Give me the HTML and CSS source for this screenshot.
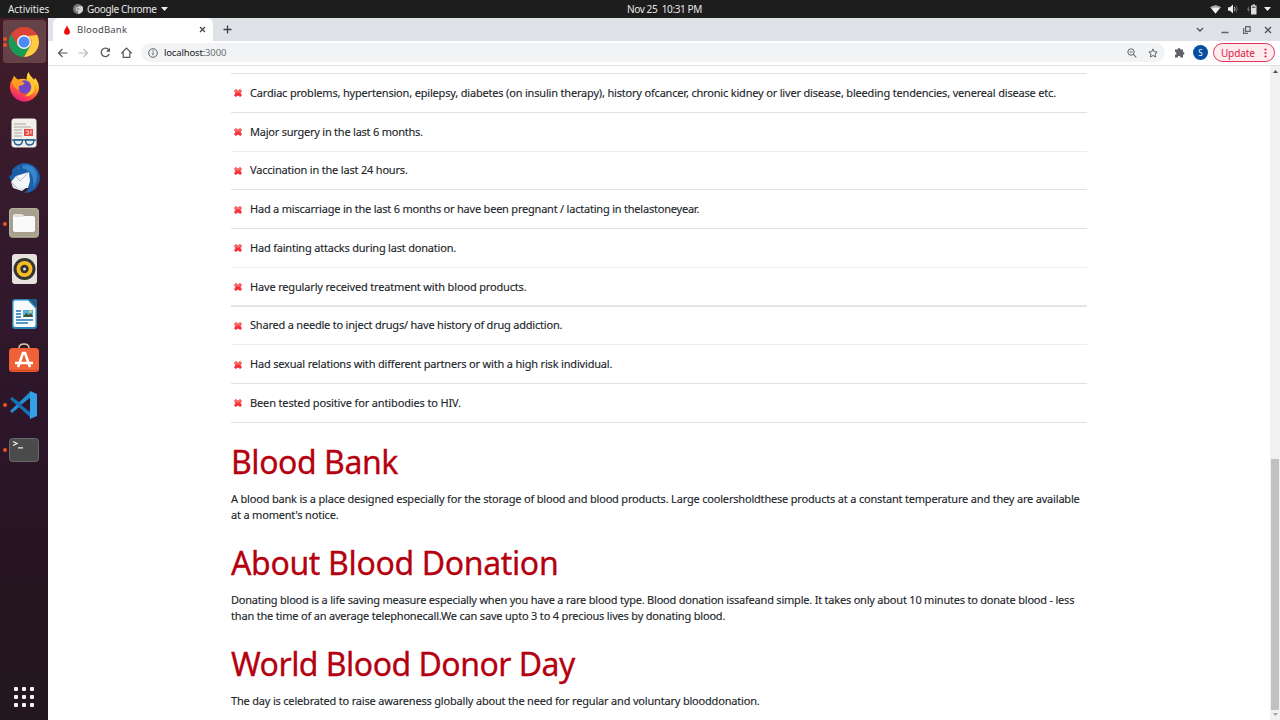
FILE: index.html
```html
<!DOCTYPE html>
<html lang="en">
<head>
<meta charset="utf-8">
<title>BloodBank</title>
<link rel="stylesheet" href="styles.css">
</head>
<body>
<header class="topbar">
  <span class="activities">Activities</span>
  <div class="app-menu">
    <svg width="10" height="10" viewBox="0 0 30 30"><circle cx="15" cy="15" r="15" fill="#777"/><path d="M15 15V30A15 15 0 0 0 28 7H15Z" fill="#d0d0d0"/><circle cx="15" cy="15" r="7" fill="#eee"/><circle cx="15" cy="15" r="5" fill="#999"/></svg>
    <span>Google Chrome</span>
    <svg width="7" height="4" viewBox="0 0 7 4"><path d="M0 0h7L3.500 4z" fill="#eee"/></svg>
  </div>
  <span class="clock">Nov 25&nbsp; 10:31 PM</span>
  <div class="tray">
    <svg width="11" height="9" viewBox="0 0 11 9"><path d="M.3 2.300Q5.500-1.300 10.700 2.300L5.500 8.800Z" fill="#eee"/><path d="M.3 2.300Q5.500-1.300 10.700 2.300L9.500 3.800Q5.500 1.100 1.500 3.800Z" fill="#aaa"/></svg>
    <svg width="11" height="10" viewBox="0 0 11 10"><path d="M0 3.300h2L5 .5v9L2 6.700H0z" fill="#eee"/><path d="M6.300 3q1.500 2 0 4" stroke="#ccc" fill="none"/><path d="M8 1.500q2.500 3.500 0 7" stroke="#666" fill="none"/></svg>
    <svg width="10" height="11" viewBox="0 0 10 11"><path d="M2 2 0 6h1.500L1 9l2-4H1.800z" fill="#777"/><path d="M4 1.500h1.500V.5h2.500v1H9.500v9H4z" fill="#ddd"/><path d="M5 2.500h3.500v1.500H5z" fill="#666"/></svg>
    <svg width="7" height="4" viewBox="0 0 7 4"><path d="M0 0h7L3.500 4z" fill="#eee"/></svg>
  </div>
</header>
<div class="desktop">
  <nav class="dock">
    <div class="dock-item active two">
      <svg width="30" height="30" viewBox="0 0 30 30"><circle cx="15" cy="15" r="15" fill="#db4437"/><path d="M2 7.500A15 15 0 0 0 15 30L21.500 18.500 8.500 18.500Z" fill="#179c58"/><path d="M28.200 8A15 15 0 0 1 15 30L21.500 18.500A7 7 0 0 0 19 9Z" fill="#ffcd40"/><path d="M15 8H28.200L27 6 15 6Z" fill="#db4437"/><circle cx="15" cy="15" r="7" fill="#f4f4f4"/><circle cx="15" cy="15" r="5.500" fill="#4c8bf5"/></svg>
    </div>
    <div class="dock-item firefox">
      <svg width="31" height="31" viewBox="0 0 32 32"><defs><linearGradient id="fx" x1=".8" y1="0" x2=".3" y2="1"><stop offset="0" stop-color="#fff04a"/><stop offset=".4" stop-color="#ffad24"/><stop offset=".7" stop-color="#ff503c"/><stop offset="1" stop-color="#e31587"/></linearGradient></defs><path d="M20 1Q22 6 26 9L27 7Q33 15 30 22A15 15 0 0 1 2 22Q-1 14 4 8L5 5 9 9Q15 7 18 9 18 4 20 1Z" fill="url(#fx)"/><circle cx="16" cy="16.500" r="7" fill="#7046c7"/><path d="M3 9Q7 7 10 9L16 12Q15 15 11 15 9 17 11 20 4 18 3 9Z" fill="#ff9b24"/><path d="M20 9Q26 11 26 20 24 26 17 26 28 17 20 9Z" fill="#ffc931"/></svg>
    </div>
    <div class="dock-item">
      <svg width="26" height="30" viewBox="0 0 26 30"><rect x=".5" y=".5" width="25" height="29" rx="3" fill="#f1f0eb"/><path d="M3 6h12M3 9h17M3 12h8M3 15h8M3 18h8" stroke="#aaa79e"/><rect x="13" y="11" width="9" height="7" fill="#e34d45"/><path d="M15 13h2.500v3H15m5-4v4" stroke="#fbd5d0" fill="none"/><path d="M1 22h24" stroke="#28598b" stroke-width="1.300"/><path d="M3 22h8.500q0 5-4.200 5T3 22Zm11.500 0H23q0 5-4.300 5t-4.200-5Z" fill="#dceaf2" stroke="#28598b" stroke-width="1.400"/></svg>
    </div>
    <div class="dock-item">
      <svg width="32" height="32" viewBox="0 0 32 32"><path d="M7 5Q17-3 27 5 35 13 30 23 26 31 16 31 19 29 21 25L5 20Q2 19 1 13 4 15 4 10 3 8 7 5Z" fill="#1b5fa8"/><path d="M9 7Q16 0 25 5 31 11 28 20L25 26Q27 15 21 9 16 5 9 7Z" fill="#3486cf"/><path d="M8 14 21 10 22 19 20 26 9 26 3 20Z" fill="#f5f6fa"/><path d="M8 14 12 19 21 10" fill="none" stroke="#b3bbc7"/><path d="M3 20 9 26 18 26 14 29 5 26Z" fill="#e3e7ee"/><path d="M11 5l4-1-2 3z" fill="#174c83"/></svg>
    </div>
    <div class="dock-item one">
      <svg width="30" height="30" viewBox="0 0 30 30"><rect width="30" height="30" rx="4" fill="#978f7e"/><rect x=".5" y=".5" width="29" height="28" rx="3.500" fill="#a8a08f" stroke="#b8b09e"/><path d="M4 8Q4 6 6 6h7l2 2h9q2 0 2 2v12q0 2-2 2H6q-2 0-2-2z" fill="#fafafa"/><path d="M5 9h8l2-1-2-2H6q-2 0-1 3" fill="#e2dfd9"/></svg>
    </div>
    <div class="dock-item">
      <svg width="25" height="30" viewBox="0 0 25 30"><rect width="25" height="30" rx="3" fill="#e8e2de"/><circle cx="12.500" cy="15" r="11" fill="#343434"/><circle cx="12.500" cy="15" r="8" fill="#f6bc23"/><circle cx="12.500" cy="15" r="4.200" fill="#333"/><circle cx="12.500" cy="15" r="1.500" fill="#ddd"/></svg>
    </div>
    <div class="dock-item">
      <svg width="25" height="30" viewBox="0 0 25 30"><path d="M3 0h14l8 8v19q0 3-3 3H3q-3 0-3-3V3q0-3 3-3" fill="#2d86b8"/><path d="M3 1.500h13l7.500 8V26q0 2-2 2h-18q-2 0-2-2V3.500q0-2 1.500-2" fill="#f6fafb"/><path d="M17 0h8v8z" fill="#1e5c86"/><path d="M4 12h5M4 15h5M4 18h5M4 21h17M4 24h12" stroke="#2379ad" stroke-width="1.300"/><rect x="11" y="11" width="10" height="7" fill="#54aee0"/><path d="m11 18 3-4 3 2 2-2 2 4" fill="#42533b"/><circle cx="18.500" cy="12.800" r="1.200" fill="#ffdc47"/></svg>
    </div>
    <div class="dock-item store">
      <svg width="30" height="30" viewBox="0 0 30 30"><path d="M10 7V5q0-4 5-4t5 4v2" fill="none" stroke="#d9cba3" stroke-width="1.500"/><rect y="5" width="30" height="24" rx="3.500" fill="#ef6237"/><path d="M1.500 27.500h27" stroke="#d14b24" stroke-width="1.500"/><path d="m9 24 5-14h2l5 14M6 20h18" fill="none" stroke="#fff" stroke-width="2.600"/></svg>
    </div>
    <div class="dock-item one">
      <svg width="30" height="30" viewBox="0 0 30 30"><path d="m1 21 2 2L21 8V2Z" fill="#238ed3"/><path d="M1 9 3 7 22 21v7Z" fill="#1672b8"/><path d="M21 1 28 4v22l-7 3z" fill="#34a0e6"/><path d="M21 8 12 15 21 22Z" fill="#2e172b"/></svg>
    </div>
    <div class="dock-item one">
      <svg width="30" height="24" viewBox="0 0 30 24"><rect x=".5" y=".5" width="29" height="23" rx="3" fill="#4b4b4b" stroke="#686868"/><path d="m4 3.500 4 2-4 2M9 9.800h5" stroke="#eee" fill="none" stroke-width="1.300"/></svg>
    </div>
    <svg class="apps" width="20" height="20" viewBox="0 0 20 20" fill="#f4f4f4"><rect width="4" height="4" rx="1"/><rect x="8" width="4" height="4" rx="1"/><rect x="16" width="4" height="4" rx="1"/><rect y="8" width="4" height="4" rx="1"/><rect x="8" y="8" width="4" height="4" rx="1"/><rect x="16" y="8" width="4" height="4" rx="1"/><rect y="16" width="4" height="4" rx="1"/><rect x="8" y="16" width="4" height="4" rx="1"/><rect x="16" y="16" width="4" height="4" rx="1"/></svg>
  </nav>
  <section class="browser">
    <div class="tabstrip">
      <div class="tab">
        <svg width="8" height="10" viewBox="0 0 8 10"><path d="M4 .3Q4.500 2.300 6.300 4.500 8.300 9.500 4 9.700-.3 9.500 1.700 4.500 3.500 2.300 4 .3Z" fill="#f00a0a"/></svg>
        <span class="tab-title">BloodBank</span>
        <svg width="7" height="7" viewBox="0 0 7 7"><path d="m1 1 5 5m0-5L1 6" stroke="#45484b" stroke-width="1.200"/></svg>
      </div>
      <svg class="new-tab" width="9" height="9" viewBox="0 0 9 9"><path d="M4.500.5v8m-4-4h8" stroke="#3c4043" stroke-width="1.300"/></svg>
      <div class="window-buttons">
        <svg width="8" height="8" viewBox="0 0 8 8"><path d="m1 2 3 3 3-3" stroke="#4d5155" stroke-width="1.300" fill="none"/></svg>
        <svg width="8" height="8" viewBox="0 0 8 8"><path d="M.5 6.500h7" stroke="#5f6368" stroke-width="1.500"/></svg>
        <svg width="8" height="8" viewBox="0 0 8 8"><path d="M2.600.6h4.500v4.800H2.600zM.6 2v5.300h4.500" stroke="#5f6368" stroke-width="1.200" fill="none"/></svg>
        <svg width="8" height="8" viewBox="0 0 8 8"><path d="m1 1 6 6m0-6L1 7" stroke="#4d5155" stroke-width="1.300"/></svg>
      </div>
    </div>
    <div class="toolbar">
      <div class="nav-buttons">
        <svg width="11" height="10" viewBox="0 0 11 10"><path d="M10.500 5H1.500M5.500 1l-4 4 4 4" stroke="#55595e" stroke-width="1.200" fill="none"/></svg>
        <svg width="11" height="10" viewBox="0 0 11 10"><path d="M.5 5h9M5.500 1l4 4-4 4" stroke="#b9bbbe" stroke-width="1.200" fill="none"/></svg>
        <svg width="11" height="11" viewBox="0 0 11 11"><path d="M9.300 7A4.200 4.200 0 1 1 8.800 2.800" stroke="#55595e" stroke-width="1.300" fill="none"/><path d="M10 .7v4H6z" fill="#55595e"/></svg>
        <svg width="11" height="11" viewBox="0 0 11 11"><path d="M.7 6 5.500 1l4.800 5H8.800v4.300H2.200V6z" stroke="#55595e" stroke-width="1.200" fill="none"/></svg>
      </div>
      <div class="omnibox">
        <svg width="10" height="10" viewBox="0 0 10 10"><circle cx="5" cy="5" r="4.300" stroke="#5f6368" fill="none"/><path d="M5 4.300v3M5 2.300v1.100" stroke="#5f6368" stroke-width="1.100"/></svg>
        <span class="url">localhost:<span class="port">3000</span></span>
        <svg class="magnifier" width="10" height="10" viewBox="0 0 10 10"><circle cx="4" cy="4" r="3.200" stroke="#5f6368" fill="none"/><path d="m6.300 6.300 3 3M2.500 4h3" stroke="#5f6368" stroke-width="1.100"/></svg>
        <svg width="10" height="10" viewBox="0 0 10 10"><path d="m5 .9 1.200 2.800 3 .3L7 6l.7 3L5 7.500 2.300 9 3 6 .8 4l3-.3z" stroke="#5f6368" fill="none"/></svg>
      </div>
      <svg class="puzzle" width="11" height="11" viewBox="0 0 11 11"><path d="M1 2.500h2.500a1.500 1.500 0 1 1 3 0H9V5a1.400 1.400 0 1 1 0 2.800v2.700H6.500a1.400 1.400 0 0 0-2.800 0H1V7.800A1.400 1.400 0 0 0 1 5z" fill="#5f6368"/></svg>
      <span class="avatar">S</span>
      <div class="update"><span>Update</span><svg width="3" height="10" viewBox="0 0 3 10" fill="#e0284e"><circle cx="1.500" cy="1.500" r="1.100"/><circle cx="1.500" cy="5" r="1.100"/><circle cx="1.500" cy="8.500" r="1.100"/></svg></div>
    </div>
    <div class="viewport">
      <main class="content">
        <svg class="symbols" width="0" height="0"><symbol id="cross" viewBox="0 0 8 8"><path d="M2 0 4 1.700 6 0 8 2 6.500 4 8 6.200 6.200 8 4 6.500 1.800 8 0 6.200 1.500 4 0 2Z" fill="#f8303c"/><path d="M2 .5 4 2.200 6 .5 7.300 2 6 3.600H2L.7 2Z" fill="#f8726a"/></symbol></svg>
        <ul class="criteria">
          <li><svg><use href="#cross"/></svg><span class="l1">Cardiac problems, hypertension, epilepsy, diabetes (on insulin therapy), history ofcancer, chronic kidney or liver disease, bleeding tendencies, venereal disease etc.</span></li>
          <li><svg><use href="#cross"/></svg><span class="l2">Major surgery in the last 6 months.</span></li>
          <li><svg><use href="#cross"/></svg><span class="l3">Vaccination in the last 24 hours.</span></li>
          <li><svg><use href="#cross"/></svg><span class="l4">Had a miscarriage in the last 6 months or have been pregnant / lactating in thelastoneyear.</span></li>
          <li><svg><use href="#cross"/></svg><span class="l5">Had fainting attacks during last donation.</span></li>
          <li><svg><use href="#cross"/></svg><span class="l6">Have regularly received treatment with blood products.</span></li>
          <li><svg><use href="#cross"/></svg><span class="l7">Shared a needle to inject drugs/ have history of drug addiction.</span></li>
          <li><svg><use href="#cross"/></svg><span class="l8">Had sexual relations with different partners or with a high risk individual.</span></li>
          <li><svg><use href="#cross"/></svg><span class="l9">Been tested positive for antibodies to HIV.</span></li>
        </ul>
        <article><h1><span class="h1a">Blood Bank</span></h1><p><span class="p1">A blood bank is a place designed especially for the storage of blood and blood products. Large coolersholdthese products at a constant temperature and they are available</span><br><span class="p2">at a moment's notice.</span></p></article>
        <article><h1><span class="h1b">About Blood Donation</span></h1><p><span class="p3">Donating blood is a life saving measure especially when you have a rare blood type. Blood donation issafeand simple. It takes only about 10 minutes to donate blood - less</span><br><span class="p4">than the time of an average telephonecall.We can save upto 3 to 4 precious lives by donating blood.</span></p></article>
        <article><h1><span class="h1c">World Blood Donor Day</span></h1><p><span class="p5">The day is celebrated to raise awareness globally about the need for regular and voluntary blooddonation.</span></p></article>
      </main>
      <div class="scrollbar">
        <svg width="5" height="3" viewBox="0 0 5 3"><path d="M0 3h5L2.500 0z" fill="#505050"/></svg>
        <div class="thumb"></div>
        <svg width="5" height="3" viewBox="0 0 5 3"><path d="M0 0h5L2.500 3z" fill="#a3a3a3"/></svg>
      </div>
    </div>
  </section>
</div>
</body>
</html>
```
FILE: styles.css
```css
* { box-sizing: border-box; }
body { margin: 0; width: 1280px; height: 720px; overflow: hidden; display: flex; flex-direction: column; font-family: "Noto Sans", "Open Sans", sans-serif; background: #fff; }
svg { display: block; flex: none; }
span { white-space: nowrap; }
.topbar { height: 18px; flex: none; background: #1d1d1d; color: #e6e6e6; display: grid; grid-template-columns: 65px 554px 1fr auto; align-items: center; padding: 0 9px 0 8px; font-size: 10px; line-height: 18px; }
.activities { letter-spacing: -.04px; }
.app-menu { display: flex; align-items: center; gap: 4px; letter-spacing: -.33px; }
.clock { letter-spacing: -.38px; }
.tray { display: flex; align-items: center; gap: 7.500px; }
.desktop { flex: 1; display: flex; min-height: 0; }
.dock { width: 48px; flex: none; background: linear-gradient(#421c27, #351a2d 28%, #2c1529 60%, #25151f 82%, #241720); display: flex; flex-direction: column; align-items: center; padding-top: 1.300px; }
.dock-item { position: relative; width: 43px; height: 45.330px; flex: none; display: flex; align-items: center; justify-content: center; }
.active { background: #644248; border-radius: 3px; height: 43px; margin: 1.100px 0 1.230px; }
.firefox, .store { padding-bottom: 2px; }
.one::before, .two::before, .two::after { content: ""; position: absolute; left: 0; top: 21px; width: 4px; height: 4px; border-radius: 50%; background: #e95420; }
.two::before { top: 17px; }
.two::after { top: 22.500px; }
.apps { margin-top: auto; margin-bottom: 13px; }
.browser { flex: 1; min-width: 0; display: flex; flex-direction: column; }
.tabstrip { height: 23px; flex: none; background: #dee1e6; display: flex; align-items: center; padding: 0 8px 0 5px; }
.tab { align-self: stretch; width: 160px; background: #fff; border-radius: 6px 6px 0 0; display: flex; align-items: center; padding: 0 7px 0 10px; }
.tab-title { flex: 1; margin-left: 6px; font-size: 9.500px; letter-spacing: .2px; color: #45484b; }
.new-tab { margin-left: 10px; }
.window-buttons { margin-left: auto; display: flex; gap: 13.500px; }
.window-buttons svg:first-child { margin-right: 3.500px; }
.toolbar { height: 25px; flex: none; border-bottom: 1px solid #dfe1e3; display: flex; align-items: center; padding: 0 5px 1px 9px; }
.nav-buttons { display: flex; align-items: center; gap: 10.300px; }
.omnibox { height: 19px; width: 1024px; margin-left: 9px; border-radius: 10px; background: #f1f3f4; display: flex; align-items: center; padding: 0 7px; }
.url { margin-left: 6px; font-size: 9.500px; letter-spacing: -.15px; color: #202124; }
.port { color: #6b6f73; }
.magnifier { margin-left: auto; margin-right: 11px; }
.puzzle { margin-left: 9px; }
.avatar { margin-left: 8px; width: 15px; height: 15px; border-radius: 50%; background: #04509f; color: #fff; font-size: 8px; line-height: 15px; text-align: center; flex: none; }
.update { margin-left: 5px; flex: 1; height: 19px; border: 1px solid #e3365a; border-radius: 10px; background: #fdebee; color: #dc2048; font-size: 10px; letter-spacing: -.1px; display: flex; align-items: center; justify-content: space-between; padding: 0 7px; }
.viewport { flex: 1; min-height: 0; display: flex; justify-content: space-between; }
.content { width: 856px; margin-left: 183px; padding-top: 7px; color: #212529; font-size: 11px; -webkit-text-stroke: .12px; }
.symbols { height: 0; }
.criteria { list-style: none; margin: 0; padding: 0; border-top: 1px solid #dfe1e3; }
.criteria li { height: 38.750px; border-bottom: 1px solid #dfe1e3; display: flex; align-items: center; padding: 0 0 1px 3px; }
.criteria li:nth-child(2), .criteria li:nth-child(5), .criteria li:nth-child(7) { border-color: #eceded; }
.criteria li:nth-child(6) { box-shadow: inset 0 -1px #e6e7e8; }
.criteria svg { width: 8px; height: 8px; margin-right: 8px; margin-top: 2px; }
article { height: 101px; }
article:first-of-type { margin-top: 19px; }
h1 { margin: 0; height: 40px; font-size: 32px; line-height: 40px; font-weight: 400; color: #b5000f; -webkit-text-stroke: .3px; }
p { margin: 9.500px 0 0; line-height: 16px; }
.l1, .l8 { letter-spacing: -.184px; }
.l2 { letter-spacing: -.23px; }
.l3 { letter-spacing: -.19px; }
.l4 { letter-spacing: -.214px; }
.l5 { letter-spacing: -.2px; }
.l6 { letter-spacing: -.165px; }
.l7 { letter-spacing: -.21px; }
.l9 { letter-spacing: -.14px; }
.p1, .p4, .p5 { letter-spacing: -.188px; }
.p2 { letter-spacing: -.19px; }
.p3 { letter-spacing: -.212px; }
.h1a { letter-spacing: -.45px; }
.h1b { letter-spacing: -.35px; }
.h1c { letter-spacing: -.52px; }
.scrollbar { width: 10px; background: #f1f1f1; display: flex; flex-direction: column; align-items: center; padding: 4px 0; }
.thumb { width: 8px; height: 251px; margin-top: auto; margin-bottom: 3px; background: #c1c1c1; }
```
